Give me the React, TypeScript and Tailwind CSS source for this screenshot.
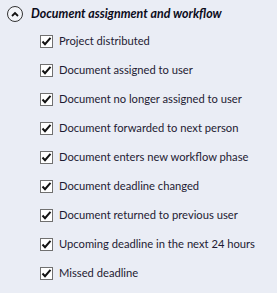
import { useState } from "react";

const items = [
  "Project distributed",
  "Document assigned to user",
  "Document no longer assigned to user",
  "Document forwarded to next person",
  "Document enters new workflow phase",
  "Document deadline changed",
  "Document returned to previous user",
  "Upcoming deadline in the next 24 hours",
  "Missed deadline",
];

const CheckRow = ({ label }: { label: string }) => {
  const [checked, setChecked] = useState<boolean>(true);
  return (
    <label
      className="flex items-center h-[29px] cursor-pointer select-none"
      onClick={() => setChecked(!checked)}
    >
      <span className="w-[13px] h-[13px] shrink-0 bg-white border border-[#707070] flex items-center justify-center">
        {checked && (
          <svg width="11" height="11" viewBox="0 0 11 11">
            <path
              d="M1.5 5.5 L4 8.2 L9.5 1.8"
              fill="none"
              stroke="#111"
              strokeWidth="2"
            />
          </svg>
        )}
      </span>
      <span className="ml-[6px] pb-[1px] text-[11.2px] text-[#1e1b33] leading-none whitespace-nowrap">
        {label}
      </span>
    </label>
  );
};

export default function App() {
  return (
    <div
      className="w-[277px] h-[293px] bg-[#eaedf5] overflow-hidden"
      style={{ fontFamily: 'Lato, "Noto Sans", sans-serif' }}
    >
      <div className="flex items-center h-[28px] pl-[7px]">
        <span className="w-[16px] h-[16px] rounded-full border border-[#333] bg-white/40 flex items-center justify-center">
          <svg width="8" height="6" viewBox="0 0 8 6">
            <path d="M1 5 L4 2 L7 5" fill="none" stroke="#111" strokeWidth="1.8" />
          </svg>
        </span>
        <span className="ml-[8px] text-[12.4px] font-bold italic text-[#0b0b1a] whitespace-nowrap">
          Document assignment and workflow
        </span>
      </div>
      <div className="pl-[40px] -mt-[1px]">
        {items.map((item) => (
          <CheckRow key={item} label={item} />
        ))}
      </div>
    </div>
  );
}
